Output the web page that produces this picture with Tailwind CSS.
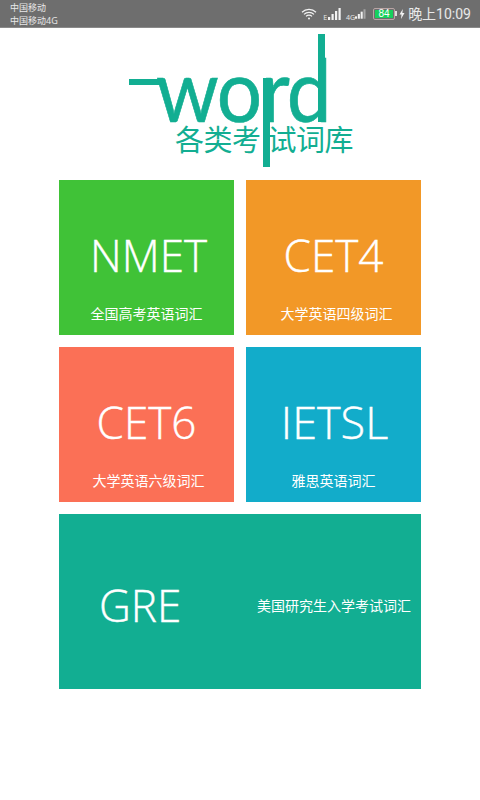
<!DOCTYPE html>
<html lang="zh">
<head>
  <meta charset="UTF-8" />
  <title>word</title>
  <script src="https://cdn.jsdelivr.net/npm/@tailwindcss/browser@4"></script>
</head>
<body class="bg-white w-[480px] h-[800px] overflow-hidden font-['Open_Sans','Noto_Sans_CJK_SC',sans-serif]">

  <!-- status bar -->
  <header class="h-[28px] bg-[#6e6e6e] flex justify-between items-center pl-[10px] pr-[9px] text-white/85 border-b border-[#8a8a8a]">
    <div class="text-[9px] leading-[13px]">
      <div>中国移动</div>
      <div>中国移动4G</div>
    </div>
    <div class="flex items-center">
      <svg class="w-[16px] h-[12px] mr-[6px]" viewBox="0 0 16 12" fill="none" stroke="#f2f2f2" stroke-width="1.2">
        <path d="M1 4.2a10 10 0 0 1 14 0" />
        <path d="M3 6.4a7 7 0 0 1 10 0" />
        <path d="M5 8.4a4.2 4.2 0 0 1 6 0" />
        <circle cx="8" cy="10.4" r="1" fill="#f2f2f2" stroke="none" />
      </svg>
      <span class="text-[7px] leading-none self-start mt-[7px]">E</span>
      <svg class="w-[14px] h-[12px] mr-[5px]" viewBox="0 0 14 12" fill="#f2f2f2">
        <rect x="1" y="9" width="2.2" height="3" />
        <rect x="4.5" y="6" width="2.2" height="6" />
        <rect x="8" y="3" width="2.2" height="9" />
        <rect x="11.5" y="0" width="2.2" height="12" />
      </svg>
      <span class="text-[7px] leading-none self-start mt-[7px]">4G</span>
      <svg class="w-[11px] h-[12px] mr-[7px]" viewBox="0 0 14 12" fill="#f2f2f2">
        <rect x="0" y="9" width="2.6" height="3" />
        <rect x="3.6" y="6" width="2.6" height="6" />
        <rect x="7.2" y="3" width="2.6" height="9" />
        <rect x="10.8" y="0" width="2.6" height="12" fill="#a5a5a5" />
      </svg>
      <div class="w-[22px] h-[12px] border border-[#b9a5a5] rounded-[2px] p-[1px] flex">
        <div class="flex-1 bg-[#16d05c] text-white text-[10px] leading-[8px] text-center font-['Liberation_Sans',sans-serif]">84</div>
      </div>
      <div class="w-[2px] h-[5px] bg-[#e0e0e0] mr-[2px]"></div>
      <svg class="w-[6px] h-[10px] mr-[3px]" viewBox="0 0 6 10" fill="#f2f2f2"><path d="M3.8 0 .5 5.6h2L2 10l3.5-6H3.4z" /></svg>
      <span class="text-[14px] leading-none font-['Roboto','Noto_Sans_CJK_SC',sans-serif]">晚上10:09</span>
    </div>
  </header>

  <!-- logo -->
  <div class="relative h-[152px] text-[#12ae92]">
    <div class="absolute left-[129px] top-[51px] w-[34px] h-[6px] bg-[#12ae92]"></div>
    <div class="absolute left-[156px] top-[15px] text-[80px] leading-[100px] tracking-[-1.5px] font-['Lato',sans-serif] [-webkit-text-stroke:0.6px_#12ae92] scale-y-[1.09] origin-bottom">word</div>
    <div class="absolute left-[318px] top-[6px] w-[7px] h-[88px] bg-[#12ae92]"></div>
    <div class="absolute left-[263px] top-[50px] w-[7px] h-[89px] bg-[#12ae92]"></div>
    <div class="absolute left-[175px] top-[91px] text-[29px] leading-[38px] tracking-[-0.5px] whitespace-nowrap font-['Noto_Sans_CJK_SC',sans-serif]">
      <span class="mr-[7px]">各类考</span><span>试词库</span>
    </div>
  </div>

  <!-- tiles -->
  <main class="w-[362px] ml-[59px] grid grid-cols-2 gap-x-[12px] gap-y-[12px] text-white">
    <a class="h-[155px] bg-[#40c237] flex flex-col items-center">
      <div class="mt-[48px] pl-[4px] text-[44px] leading-[54px] font-light [-webkit-text-stroke:0.4px_#fff]">NMET</div>
      <div class="mt-[21px] text-[14px] leading-[20px] font-['Noto_Sans_CJK_SC',sans-serif]">全国高考英语词汇</div>
    </a>
    <a class="h-[155px] bg-[#f29827] flex flex-col items-center">
      <div class="mt-[48px] text-[44px] leading-[54px] font-light [-webkit-text-stroke:0.4px_#fff]">CET4</div>
      <div class="mt-[21px] pl-[6px] text-[14px] leading-[20px] font-['Noto_Sans_CJK_SC',sans-serif]">大学英语四级词汇</div>
    </a>
    <a class="h-[155px] bg-[#fb7056] flex flex-col items-center">
      <div class="mt-[48px] text-[44px] leading-[54px] font-light [-webkit-text-stroke:0.4px_#fff]">CET6</div>
      <div class="mt-[21px] pl-[4px] text-[14px] leading-[20px] font-['Noto_Sans_CJK_SC',sans-serif]">大学英语六级词汇</div>
    </a>
    <a class="h-[155px] bg-[#12acca] flex flex-col items-center">
      <div class="mt-[48px] pl-[2px] text-[45px] leading-[54px] font-light [-webkit-text-stroke:0.4px_#fff]">IETSL</div>
      <div class="mt-[21px] text-[14px] leading-[20px] font-['Noto_Sans_CJK_SC',sans-serif]">雅思英语词汇</div>
    </a>
    <a class="col-span-2 h-[175px] bg-[#12ae92] flex items-center justify-between pt-[6px] pl-[40px] pr-[10px]">
      <div class="text-[44px] leading-[54px] font-light [-webkit-text-stroke:0.4px_#fff]">GRE</div>
      <div class="text-[14px] leading-[20px] font-['Noto_Sans_CJK_SC',sans-serif]">美国研究生入学考试词汇</div>
    </a>
  </main>
</body>
</html>
